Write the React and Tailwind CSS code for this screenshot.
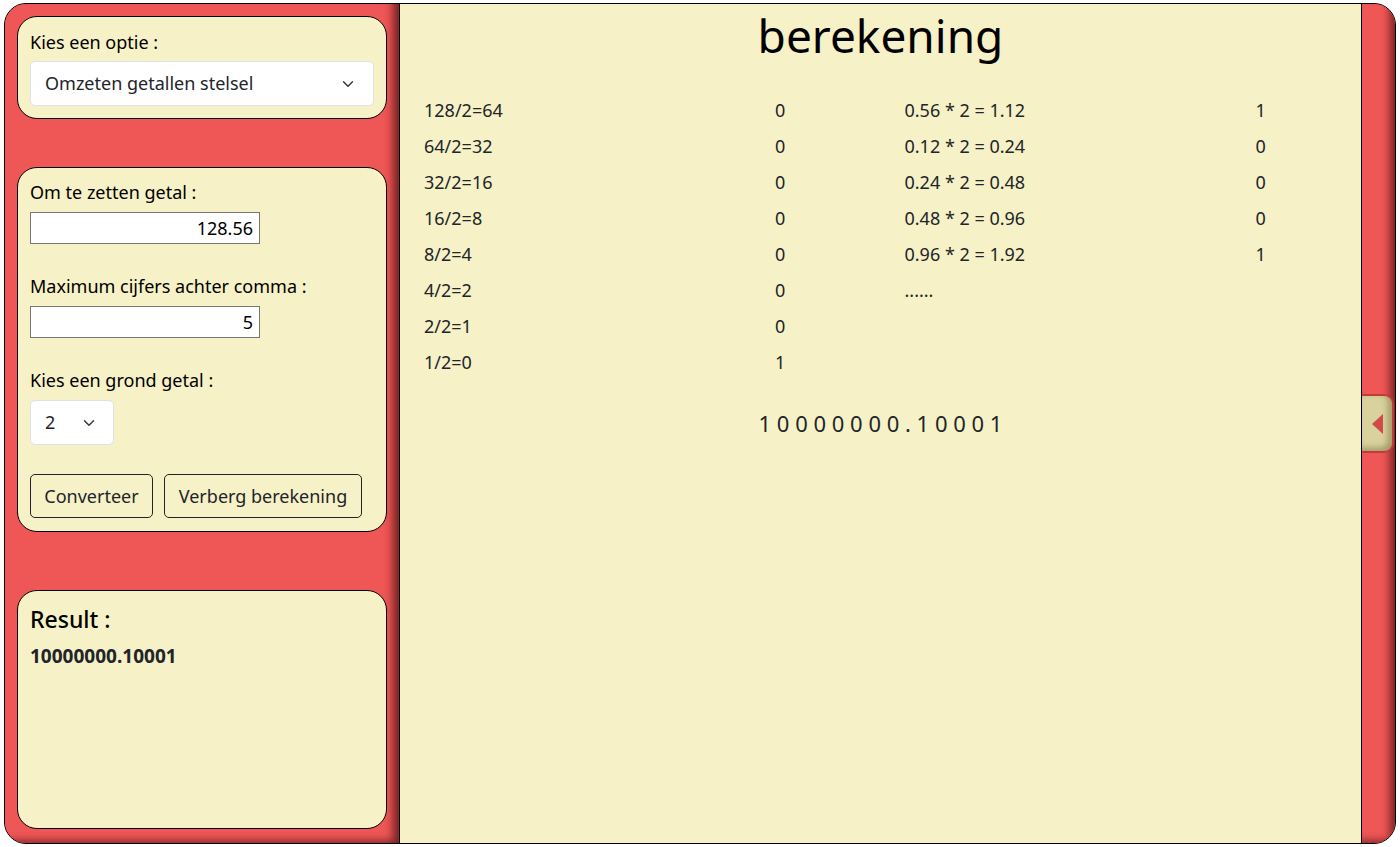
import React from "react";

const leftRows = [
  ["128/2=64", "0"],
  ["64/2=32", "0"],
  ["32/2=16", "0"],
  ["16/2=8", "0"],
  ["8/2=4", "0"],
  ["4/2=2", "0"],
  ["2/2=1", "0"],
  ["1/2=0", "1"],
];

const rightRows = [
  ["0.56 * 2 = 1.12", "1"],
  ["0.12 * 2 = 0.24", "0"],
  ["0.24 * 2 = 0.48", "0"],
  ["0.48 * 2 = 0.96", "0"],
  ["0.96 * 2 = 1.92", "1"],
  ["......", ""],
];

const Chevron = () => (
  <svg width="16" height="12" viewBox="0 0 16 16" className="shrink-0">
    <path d="m2 5 6 6 6-6" fill="none" stroke="#343a40" strokeWidth="2" strokeLinecap="round" strokeLinejoin="round" />
  </svg>
);

const Card = ({ className = "", children }) => (
  <div className={`bg-[#f6f1c7] border border-black rounded-[20px] px-[12px] ${className}`}>
    {children}
  </div>
);

const CalcTable = ({ rows }) => (
  <div className="flex-1 pl-[24px]">
    {rows.map(([calc, bit], i) => (
      <div key={i} className="grid grid-cols-[351px_1fr] h-[36px] items-center">
        <span>{calc}</span>
        <span>{bit}</span>
      </div>
    ))}
  </div>
);

export default function App() {
  return (
    <div className="pl-[4px] pt-[3px] font-['Segoe_UI','Noto_Sans',sans-serif] text-[#212529]">
      <div className="w-[1392px] h-[841px] border border-black rounded-[22px] overflow-hidden flex bg-[#ef5656]">

        {/* Sidebar */}
        <div className="w-[394px] shrink-0 bg-[#ef5656] pl-[12px] pr-[12px] pt-[12px] flex flex-col shadow-[inset_-9px_-5px_8px_-3px_rgba(40,0,0,0.6)]">
          <Card className="pt-[13px] pb-[12px]">
            <div className="text-[18px] leading-[24px] text-black mb-[7px]">Kies een optie :</div>
            <div className="h-[45px] bg-white border border-[#dee2e6] rounded-[5px] flex items-center justify-between pl-[14px] pr-[17px] text-[18px]">
              <span>Omzeten getallen stelsel</span>
              <Chevron />
            </div>
          </Card>

          <Card className="mt-[48px] pt-[12px] pb-[13px]">
            <div className="text-[18px] leading-[24px] text-black mb-[8px]">Om te zetten getal :</div>
            <div className="w-[230px] h-[32px] bg-white border border-[#767676] flex items-center justify-end pr-[6px] text-[18px] text-black">128.56</div>
            <div className="text-[18px] leading-[24px] text-black mt-[30px] mb-[8px]">Maximum cijfers achter comma :</div>
            <div className="w-[230px] h-[32px] bg-white border border-[#767676] flex items-center justify-end pr-[6px] text-[18px] text-black">5</div>
            <div className="text-[18px] leading-[24px] text-black mt-[30px] mb-[8px]">Kies een grond getal :</div>
            <div className="w-[84px] h-[45px] bg-white border border-[#dee2e6] rounded-[5px] flex items-center justify-between pl-[14px] pr-[16px] text-[18px]">
              <span>2</span>
              <Chevron />
            </div>
            <div className="flex gap-[11px] mt-[29px]">
              <button className="h-[44px] w-[123px] border border-[#212529] rounded-[5px] text-[18px]">Converteer</button>
              <button className="h-[44px] w-[198px] border border-[#212529] rounded-[5px] text-[18px]">Verberg berekening</button>
            </div>
          </Card>

          <Card className="mt-[58px] h-[239px] pt-[14px]">
            <div className="text-[23px] leading-[29px] font-medium text-black">Result :</div>
            <div className="text-[19px] font-bold mt-[8px]">10000000.10001</div>
          </Card>
        </div>

        {/* Main */}
        <div className="w-[963px] shrink-0 bg-[#f6f1c7] border-x border-black">
          <h1 className="text-center text-[46px] leading-[56px] text-black pt-[3px]">berekening</h1>
          <div className="flex mt-[29px] text-[18px]">
            <CalcTable rows={leftRows} />
            <CalcTable rows={rightRows} />
          </div>
          <div className="text-center text-[22px] mt-[27px]">1 0 0 0 0 0 0 0 . 1 0 0 0 1</div>
        </div>

        {/* Right strip */}
        <div className="flex-1 bg-[#ef5656] flex items-center shadow-[inset_-8px_-5px_8px_-3px_rgba(40,0,0,0.6)]">
          <button className="w-[32px] h-[59px] bg-[#d9d29d] border-y-2 border-r-2 border-[#c23a3a] rounded-r-[10px] flex items-center justify-center shadow-[inset_-4px_-3px_6px_rgba(60,50,0,0.35)]">
            <svg width="11" height="20" viewBox="0 0 11 20">
              <polygon points="0,10 11,0 11,20" fill="#d14a4a" />
            </svg>
          </button>
        </div>

      </div>
    </div>
  );
}
